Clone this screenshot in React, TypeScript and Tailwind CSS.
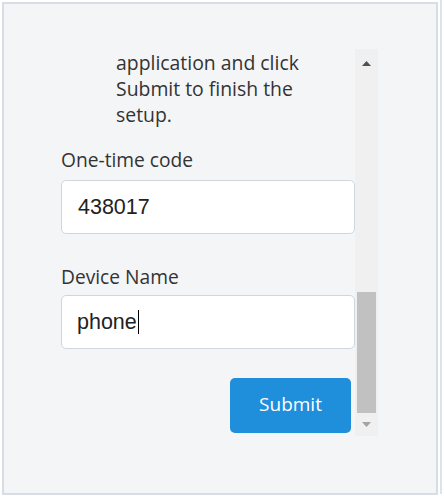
import React from "react";

export default function App() {
  return (
    <div className="w-[444px] h-[498px] bg-white flex" style={{ fontFamily: '"Open Sans", "Noto Sans", sans-serif' }}>
      <div className="ml-[2px] mt-[2px] w-[436px] h-[493px] border-2 border-[#d6dde5] bg-[#f4f5f7] pl-[57px] pt-[45px]">
        <div className="flex h-[387px] w-[317px]">
          <div className="w-[294px] h-full overflow-hidden flex flex-col">
            <p className="pl-[55px] mt-[1px] text-[19.4px] leading-[26px] text-[#333] w-[270px]">
              application and click
              <br />
              Submit to finish the
              <br />
              setup.
            </p>
            <label className="mt-[19px] text-[19.2px] leading-[26px] text-[#333]">One-time code</label>
            <div className="mt-[7px] h-[54px] rounded-[5px] border border-[#cfd6de] bg-white flex items-center pl-[16px] text-[21.5px] text-[#222]" style={{ fontFamily: '"Liberation Sans", Arial, sans-serif' }}>
              438017
            </div>
            <label className="mt-[30px] text-[19.2px] leading-[26px] text-[#333]">Device Name</label>
            <div className="mt-[5px] h-[54px] rounded-[5px] border border-[#cfd6de] bg-white flex items-center pl-[15px] text-[21.5px] text-[#222]" style={{ fontFamily: '"Liberation Sans", Arial, sans-serif' }}>
              phone
              <span className="inline-block w-[1.5px] h-[24px] bg-black ml-[1px]" />
            </div>
            <div className="mt-[29px] flex justify-end pr-[4px]">
              <button className="w-[121px] h-[55px] rounded-[5px] bg-[#1f8edb] text-white text-[19px] font-medium leading-none pb-[2px]">
                Submit
              </button>
            </div>
          </div>
          <div className="w-[23px] h-full bg-[#f0f0f1] flex flex-col items-center">
            <div className="h-[20px] w-full flex items-end justify-center pb-[3px]">
              <svg width="9" height="5" viewBox="0 0 9 5"><polygon points="0,5 4.5,0 9,5" fill="#505050" /></svg>
            </div>
            <div className="flex-1 w-full flex flex-col justify-end px-[2px]">
              <div className="h-[121px] w-full bg-[#c1c1c1]" />
            </div>
            <div className="h-[23px] w-full flex items-start justify-center pt-[9px]">
              <svg width="9" height="5" viewBox="0 0 9 5"><polygon points="0,0 9,0 4.5,5" fill="#a3a3a3" /></svg>
            </div>
          </div>
        </div>
      </div>
      <div className="ml-[2px] w-[2px] h-[494px] bg-[#dde3ea]" />
    </div>
  );
}
